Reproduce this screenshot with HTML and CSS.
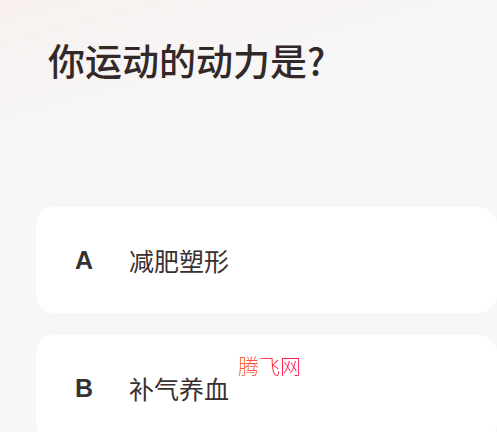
FILE: index.html
```html
<!DOCTYPE html>
<html lang="zh">
<head>
<meta charset="utf-8">
<link rel="stylesheet" href="styles.css">
</head>
<body>
<div class="page">
  <h1 class="title">你运动的动力是?</h1>
  <div class="options">
    <div class="option">
      <span class="letter">A</span>
      <span class="label">减肥塑形</span>
    </div>
    <div class="option">
      <span class="letter">B</span>
      <span class="label">补气养血</span>
      <span class="watermark">腾飞网</span>
    </div>
  </div>
</div>
</body>
</html>
```
FILE: styles.css
```css
html, body {
  margin: 0;
  padding: 0;
}
body {
  width: 497px;
  height: 432px;
  overflow: hidden;
  background: #f7f7f7;
  font-family: "Noto Sans CJK SC", "Noto Sans", sans-serif;
}
.page {
  min-height: 432px;
  background:
    linear-gradient(165deg, rgba(248, 240, 238, 0.9) 0%, rgba(247, 247, 247, 0) 28%),
    #f7f7f7;
  padding: 37px 0 0 36px;
  box-sizing: border-box;
}
.title {
  margin: 0 0 0 12px;
  font-size: 37px;
  line-height: 46px;
  font-weight: 500;
  color: #332828;
}
.options {
  margin-top: 124px;
  display: flex;
  flex-direction: column;
  gap: 22px;
}
.option {
  position: relative;
  height: 106px;
  background: #fff;
  border-radius: 18px;
  display: flex;
  align-items: center;
  padding-left: 39px;
}
.letter {
  width: 54px;
  font-family: "Liberation Sans", Arial, sans-serif;
  font-weight: 700;
  font-size: 25px;
  color: #333;
}
.label {
  font-size: 25px;
  color: #3a3030;
}
.watermark {
  position: absolute;
  left: 202px;
  top: 15px;
  font-size: 21px;
  font-weight: 300;
  color: #ff3a3a;
  background: linear-gradient(90deg, #ff6a3a, #ff2a4a 60%, #ff1a5a);
  -webkit-background-clip: text;
  background-clip: text;
  -webkit-text-fill-color: transparent;
}
```
